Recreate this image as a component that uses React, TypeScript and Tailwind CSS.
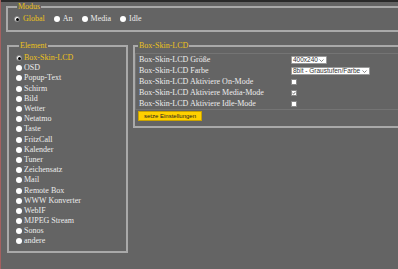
import React from "react";

const gold = "text-[#ecc21a]";

function Radio({ on }: { on?: boolean }) {
  return on ? (
    <span className="inline-flex w-[6px] h-[6px] rounded-full bg-white border border-[#888] items-center justify-center shrink-0">
      <span className="w-[3px] h-[3px] rounded-full bg-black" />
    </span>
  ) : (
    <span className="inline-block w-[6px] h-[6px] rounded-full bg-white shrink-0" />
  );
}

function Select({ value, w }: { value: string; w: string }) {
  return (
    <span
      className={`${w} h-[8px] bg-white border border-[#9a9a9a] rounded-[1px] flex items-center justify-between pl-[1px] pr-[2px] font-['Liberation_Sans',sans-serif] text-[6.5px] leading-none text-[#333]`}
    >
      {value}
      <svg width="5" height="3" viewBox="0 0 5 3">
        <path d="M0.5 0.5 L2.5 2.5 L4.5 0.5" fill="none" stroke="#555" strokeWidth="0.7" />
      </svg>
    </span>
  );
}

function Check({ on }: { on?: boolean }) {
  return (
    <span className="w-[6px] h-[6px] bg-white border border-[#888] flex items-center justify-center">
      {on && (
        <svg width="5" height="4" viewBox="0 0 5 4">
          <path d="M0.5 2 L2 3.3 L4.5 0.5" fill="none" stroke="#333" strokeWidth="0.9" />
        </svg>
      )}
    </span>
  );
}

export default function App() {
  const modes = ["Global", "An", "Media", "Idle"];
  const elements = [
    "Box-Skin-LCD", "OSD", "Popup-Text", "Schirm", "Bild", "Wetter", "Netatmo", "Taste",
    "FritzCall", "Kalender", "Tuner", "Zeichensatz", "Mail", "Remote Box", "WWW Konverter",
    "WebIF", "MJPEG Stream", "Sonos", "andere",
  ];
  const rows: { label: string; ctl: React.ReactNode }[] = [
    { label: "Box-Skin-LCD Größe", ctl: <Select value="400x240" w="w-[36px]" /> },
    { label: "Box-Skin-LCD Farbe", ctl: <Select value="8bit - Graustufen/Farbe" w="w-[79px]" /> },
    { label: "Box-Skin-LCD Aktiviere On-Mode", ctl: <Check /> },
    { label: "Box-Skin-LCD Aktiviere Media-Mode", ctl: <Check on /> },
    { label: "Box-Skin-LCD Aktiviere Idle-Mode", ctl: <Check /> },
  ];

  return (
    <div className="w-full h-[269px] overflow-hidden bg-[#646464]">
      <div className="w-[412px] h-full border-l border-[#a46060] font-['Liberation_Serif',serif] text-[8px] text-[#ececec]">
        <div className="h-[2px] bg-[#2a2a2a]" />

        {/* Modus */}
        <fieldset className="ml-[5px] border-2 border-[#a9a9a9] pt-[3px] pb-[6px] pl-[6px]">
          <legend className={`ml-[3px] px-[1px] leading-[9px] ${gold}`}>Modus</legend>
          <div className="flex items-center h-[10px]">
            {modes.map((m, i) => (
              <span key={m} className="flex items-center gap-[3px] mr-[9px]">
                <Radio on={i === 0} />
                <span className={i === 0 ? gold : ""}>{m}</span>
              </span>
            ))}
          </div>
        </fieldset>

        <div className="flex items-start mt-[9px]">
          {/* Element */}
          <fieldset className="ml-[6px] w-[121px] border-2 border-[#a9a9a9] pt-[3px] pb-[4px] pl-[7px]">
            <legend className={`ml-[3px] px-[1px] leading-[9px] ${gold}`}>Element</legend>
            {elements.map((e, i) => (
              <div key={e} className="flex items-center gap-[2px] h-[10.2px] whitespace-nowrap">
                <Radio on={i === 0} />
                <span className={i === 0 ? gold : ""}>{e}</span>
              </div>
            ))}
          </fieldset>

          {/* Box-Skin-LCD */}
          <fieldset className="ml-[5px] flex-1 border-2 border-[#a9a9a9] pt-[3px] pb-[5px]">
            <legend className={`ml-[3px] px-[1px] leading-[9px] ${gold}`}>Box-Skin-LCD</legend>
            <div className="border-y border-l border-[#747474]">
              {rows.map((r) => (
                <div key={r.label} className="grid grid-cols-[153px_1fr] items-center h-[11px] whitespace-nowrap">
                  <span className="pl-[3px]">{r.label}</span>
                  <span className="flex items-center pl-[2px]">{r.ctl}</span>
                </div>
              ))}
            </div>
            <button className="ml-[3px] mt-[1px] w-[64px] h-[10px] bg-[#ffd000] border border-[#c9a200] font-['Liberation_Sans',sans-serif] text-[6px] leading-none text-[#222] flex items-center justify-center">
              setze Einstellungen
            </button>
          </fieldset>
        </div>
      </div>
    </div>
  );
}
